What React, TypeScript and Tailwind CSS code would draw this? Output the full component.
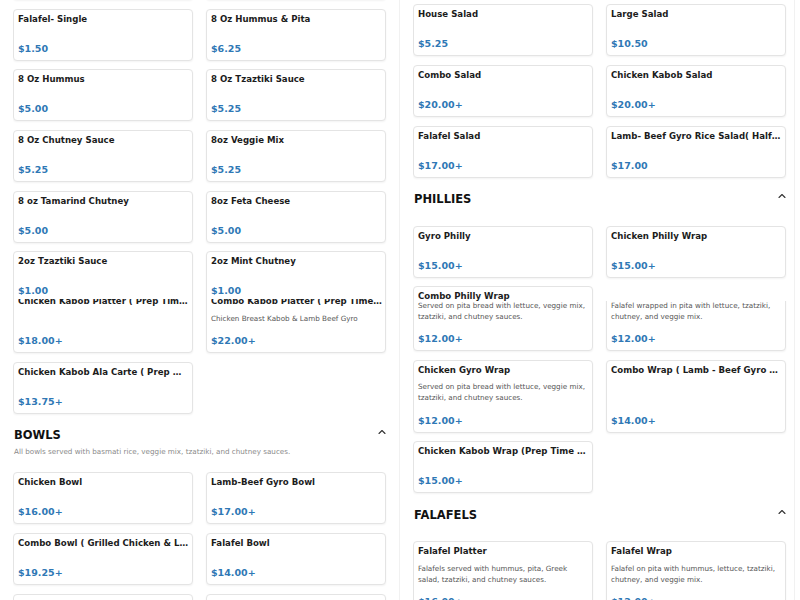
import React from 'react';

interface Item {
  title: string;
  price: string;
  desc?: string;
}

const WRAP_DESC = 'Served on pita bread with lettuce, veggie mix, tzatziki, and chutney sauces.';

// left column, first slice (scrolled so the top row only shows its bottom edge)
const sides: Item[] = [
  { title: 'Pita Bread', price: '$1.00' },
  { title: 'Basmati Rice', price: '$3.00' },
  { title: 'Falafel- Single', price: '$1.50' },
  { title: '8 Oz Hummus & Pita', price: '$6.25' },
  { title: '8 Oz Hummus', price: '$5.00' },
  { title: '8 Oz Tzaztiki Sauce', price: '$5.25' },
  { title: '8 Oz Chutney Sauce', price: '$5.25' },
  { title: '8oz Veggie Mix', price: '$5.25' },
  { title: '8 oz Tamarind Chutney', price: '$5.00' },
  { title: '8oz Feta Cheese', price: '$5.00' },
  { title: '2oz Tzaztiki Sauce', price: '$1.00' },
  { title: '2oz Mint Chutney', price: '$1.00' },
];

const platters: Item[] = [
  { title: 'Chicken Kabob Platter ( Prep Time 20 Mins )', price: '$18.00+' },
  {
    title: 'Combo Kabob Platter ( Prep Time 20 Mins )',
    desc: 'Chicken Breast Kabob & Lamb Beef Gyro',
    price: '$22.00+',
  },
  { title: 'Chicken Kabob Ala Carte ( Prep Mins )', price: '$13.75+' },
];

const bowls: Item[] = [
  { title: 'Chicken Bowl', price: '$16.00+' },
  { title: 'Lamb-Beef Gyro Bowl', price: '$17.00+' },
  { title: 'Combo Bowl ( Grilled Chicken & Lamb Gyro )', price: '$19.25+' },
  { title: 'Falafel Bowl', price: '$14.00+' },
  { title: 'Chicken Kabob Bowl ( Prep Time 20 Mins )', price: '$17.00+' },
  { title: 'Veggie Bowl', price: '$12.00+' },
];

const salads: Item[] = [
  { title: 'House Salad', price: '$5.25' },
  { title: 'Large Salad', price: '$10.50' },
  { title: 'Combo Salad', price: '$20.00+' },
  { title: 'Chicken Kabob Salad', price: '$20.00+' },
  { title: 'Falafel Salad', price: '$17.00+' },
  { title: 'Lamb- Beef Gyro Rice Salad( Half & Half )', price: '$17.00' },
];

const phillies: Item[] = [
  { title: 'Gyro Philly', price: '$15.00+' },
  { title: 'Chicken Philly Wrap', price: '$15.00+' },
  { title: 'Combo Philly Wrap', price: '$16.00+' },
];

const wraps: Item[] = [
  { title: 'Lamb-Beef Gyro Wrap', desc: WRAP_DESC, price: '$12.00+' },
  {
    title: 'Falafel Wrap',
    desc: 'Falafel wrapped in pita with lettuce, tzatziki, chutney, and veggie mix.',
    price: '$12.00+',
  },
  { title: 'Chicken Gyro Wrap', desc: WRAP_DESC, price: '$12.00+' },
  { title: 'Combo Wrap ( Lamb - Beef Gyro & Chicken )', price: '$14.00+' },
  { title: 'Chicken Kabob Wrap (Prep Time 20 Mins)', price: '$15.00+' },
];

const falafels: Item[] = [
  {
    title: 'Falafel Platter',
    desc: 'Falafels served with hummus, pita, Greek salad, tzatziki, and chutney sauces.',
    price: '$16.00+',
  },
  {
    title: 'Falafel Wrap',
    desc: 'Falafel on pita with hummus, lettuce, tzatziki, chutney, and veggie mix.',
    price: '$12.00+',
  },
];

const Card: React.FC<{ item: Item }> = ({ item }) => (
  <div className="flex min-h-[52px] min-w-0 flex-col rounded-[4px] border border-[#e4e4e4] bg-white pl-[4px] pr-[3px] pt-[3px] pb-[5px] shadow-[0_1px_2px_rgba(0,0,0,0.05)]">
    <div className="truncate text-[8.6px] font-bold leading-[12px] text-[#1c1c1c]">{item.title}</div>
    {item.desc && (
      <p className="mt-[5.5px] text-[7.2px] leading-[11px] text-[#555]">{item.desc}</p>
    )}
    <div className="mt-auto pt-[11.5px] text-[9.5px] font-bold leading-[12px] text-[#2f78b5]">
      {item.price}
    </div>
  </div>
);

const Grid: React.FC<{ items: Item[]; className?: string }> = ({ items, className = '' }) => (
  <div className={`grid grid-cols-[180px_180px] gap-x-[13px] gap-y-[8.7px] ${className}`}>
    {items.map((item, i) => (
      <Card key={i} item={item} />
    ))}
  </div>
);

const SectionHeader: React.FC<{ title: string; subtitle?: string }> = ({ title, subtitle }) => (
  <div className={`w-[373px] pl-[1px] pt-[14.5px] ${subtitle ? 'pb-[15px]' : 'pb-[19.5px]'}`}>
    <div className="flex items-start justify-between">
      <h2 className="text-[11.5px] font-bold leading-[14px] text-[#111]">{title}</h2>
      <svg width="8" height="8" viewBox="0 0 8 8" fill="none" className="shrink-0">
        <path d="M1 5.5 L4 2.5 L7 5.5" stroke="#333" strokeWidth="1.1" strokeLinecap="round" strokeLinejoin="round" />
      </svg>
    </div>
    {subtitle && <p className="mt-[5px] text-[7.2px] leading-[10px] text-[#8a8a8a]">{subtitle}</p>}
  </div>
);

export default function App() {
  return (
    <div className="flex h-[600px] w-[800px] overflow-hidden bg-white font-['DejaVu_Sans',sans-serif]">
      {/* Left column */}
      <div className="flex h-full w-[400px] shrink-0 flex-col border-r border-[#f1f1f1] pl-[13px]">
        <div className="h-[299px] shrink-0 overflow-hidden">
          <Grid items={sides} className="mt-[-52px]" />
        </div>
        <div className="min-h-0 flex-1 overflow-hidden">
          <div className="mt-[-8px]">
            <Grid items={platters} />
            <SectionHeader
              title="BOWLS"
              subtitle="All bowls served with basmati rice, veggie mix, tzatziki, and chutney sauces."
            />
            <Grid items={bowls} />
          </div>
        </div>
      </div>

      {/* Right column */}
      <div className="flex h-full w-[395px] shrink-0 flex-col border-r border-[#f1f1f1] pl-[13px]">
        <div className="h-[301px] shrink-0 overflow-hidden pt-[4.3px]">
          <Grid items={salads} />
          <SectionHeader title="PHILLIES" />
          <Grid items={phillies} />
        </div>
        <div className="min-h-0 flex-1 overflow-hidden">
          <div className="mt-[-23px]">
            <Grid items={wraps} />
            <SectionHeader title="FALAFELS" />
            <Grid items={falafels} />
          </div>
        </div>
      </div>
    </div>
  );
}
